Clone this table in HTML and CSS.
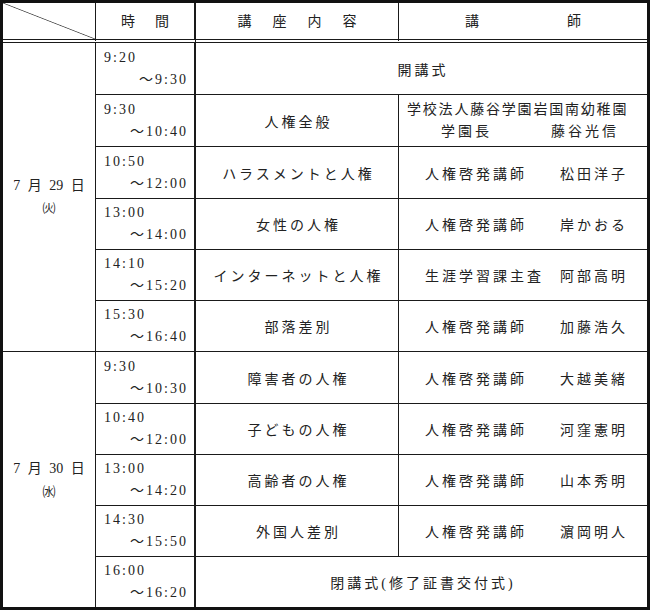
FILE: index.html
```html
<!DOCTYPE html>
<html lang="ja">
<head>
<meta charset="utf-8">
<link rel="stylesheet" href="styles.css">
</head>
<body>
<table class="sched">
  <tr class="head">
    <th class="c1 corner"></th>
    <th class="c2"><div class="spread g20"><span>時</span><span>間</span></div></th>
    <th class="c3"><div class="spread g21"><span>講</span><span>座</span><span>内</span><span>容</span></div></th>
    <th class="c4 last"><div class="spread g88"><span>講</span><span>師</span></div></th>
  </tr>
  <tr class="r52">
    <td class="date" rowspan="6"><div>7 月 29 日</div><div class="dow">㈫</div></td>
    <td class="time"><div class="t1">9:20</div><div class="t2">～9:30</div></td>
    <td class="ct last" colspan="2">開講式</td>
  </tr>
  <tr class="r52">
    <td class="time"><div class="t1">9:30</div><div class="t2">～10:40</div></td>
    <td class="ct">人権全般</td>
    <td class="inst multi last"><div class="l1">学校法人藤谷学園岩国南幼稚園</div><div class="l2"><span class="role2">学園長</span><span>藤谷光信</span></div></td>
  </tr>
  <tr class="r52">
    <td class="time"><div class="t1">10:50</div><div class="t2">～12:00</div></td>
    <td class="ct">ハラスメントと人権</td>
    <td class="inst last"><span class="role">人権啓発講師</span><span>松田洋子</span></td>
  </tr>
  <tr class="r51">
    <td class="time"><div class="t1">13:00</div><div class="t2">～14:00</div></td>
    <td class="ct">女性の人権</td>
    <td class="inst last"><span class="role">人権啓発講師</span><span>岸かおる</span></td>
  </tr>
  <tr class="r51">
    <td class="time"><div class="t1">14:10</div><div class="t2">～15:20</div></td>
    <td class="ct">インターネットと人権</td>
    <td class="inst last"><span class="role">生涯学習課主査</span><span>阿部高明</span></td>
  </tr>
  <tr class="r51">
    <td class="time"><div class="t1">15:30</div><div class="t2">～16:40</div></td>
    <td class="ct">部落差別</td>
    <td class="inst last"><span class="role">人権啓発講師</span><span>加藤浩久</span></td>
  </tr>
  <tr class="r52">
    <td class="date bottom" rowspan="5"><div>7 月 30 日</div><div class="dow">㈬</div></td>
    <td class="time"><div class="t1">9:30</div><div class="t2">～10:30</div></td>
    <td class="ct">障害者の人権</td>
    <td class="inst last"><span class="role">人権啓発講師</span><span>大越美緒</span></td>
  </tr>
  <tr class="r51">
    <td class="time"><div class="t1">10:40</div><div class="t2">～12:00</div></td>
    <td class="ct">子どもの人権</td>
    <td class="inst last"><span class="role">人権啓発講師</span><span>河窪憲明</span></td>
  </tr>
  <tr class="r51">
    <td class="time"><div class="t1">13:00</div><div class="t2">～14:20</div></td>
    <td class="ct">高齢者の人権</td>
    <td class="inst last"><span class="role">人権啓発講師</span><span>山本秀明</span></td>
  </tr>
  <tr class="r51">
    <td class="time"><div class="t1">14:30</div><div class="t2">～15:50</div></td>
    <td class="ct">外国人差別</td>
    <td class="inst last"><span class="role">人権啓発講師</span><span>濵岡明人</span></td>
  </tr>
  <tr class="r50">
    <td class="time bottom"><div class="t1">16:00</div><div class="t2">～16:20</div></td>
    <td class="ct last bottom" colspan="2">閉講式(修了証書交付式)</td>
  </tr>
</table>
</body>
</html>
```
FILE: styles.css
```css
html, body {
  margin: 0;
  padding: 0;
  background: #ffffff;
}

body {
  font-family: "Liberation Serif", "Noto Sans CJK JP", serif;
  color: #222222;
}

.sched {
  border: 3px solid #111111;
  border-spacing: 0;
  table-layout: fixed;
  width: 650px;
}

.sched th,
.sched td {
  box-sizing: border-box;
  padding: 0;
  border-right: 1px solid #1a1a1a;
  border-bottom: 1px solid #1a1a1a;
  font-weight: normal;
  font-size: 14px;
  vertical-align: middle;
  text-align: center;
}

.sched .last {
  border-right: none;
}

.sched .bottom {
  border-bottom: none;
}

.head th {
  height: 40px;
  border-bottom: 4px double #1a1a1a;
  font-family: "Noto Sans CJK JP", sans-serif;
}

.c1 { width: 93px; }
.c2 { width: 100px; border-right-width: 2px !important; }
.c3 { width: 203px; }
.c4 { width: 248px; }

.corner {
  background-image: linear-gradient(to top right, transparent calc(50% - 0.8px), #555555 50%, transparent calc(50% + 0.8px));
  background-origin: padding-box;
  background-clip: padding-box;
}

.spread {
  display: flex;
  justify-content: center;
  padding-bottom: 2px;
}

.g20 { gap: 20px; }
.g21 { gap: 21px; }
.g88 { gap: 88px; }

.r52 > td { height: 52px; }
.r51 > td { height: 51px; }
.r50 > td { height: 50px; }

.date {
  line-height: 22px;
  word-spacing: 4px;
}

.dow {
  font-family: "Noto Sans CJK JP", sans-serif;
  font-size: 13px;
}

.time {
  font-size: 15px;
  letter-spacing: 2px;
  line-height: 22px;
  border-right-width: 2px !important;
}

.t1 {
  text-align: left;
  padding-left: 8px;
}

.t2 {
  text-align: right;
  padding-right: 6px;
}

.ct {
  letter-spacing: 3px;
  padding-left: 3px !important;
}

.inst {
  text-align: left !important;
  padding-left: 26px !important;
  letter-spacing: 3px;
  white-space: nowrap;
}

.role {
  display: inline-block;
  width: 135px;
}

.inst.multi {
  padding-left: 0 !important;
  line-height: 22px;
}

.l1 {
  padding-left: 8px;
  letter-spacing: 1.8px;
}

.l2 {
  padding-left: 42px;
}

.role2 {
  display: inline-block;
  width: 110px;
}
```
